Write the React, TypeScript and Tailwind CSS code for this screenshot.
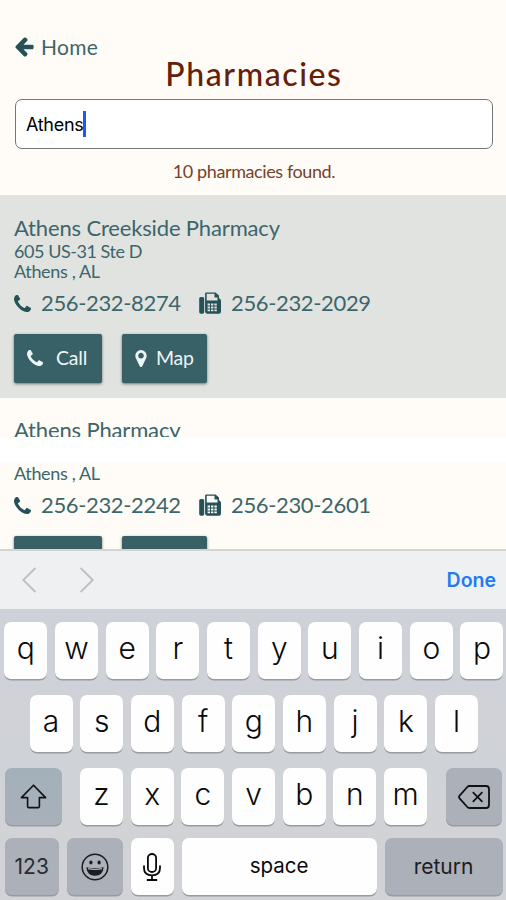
import type { ReactNode } from "react";
import clsx from "clsx";

type IconProps = { className?: string };

function ArrowLeftIcon({ className }: IconProps) {
  return (
    <svg className={className} viewBox="64 150 1472 1620" fill="currentColor">
      <path d="M1536 896v128q0 53-32.5 90.5t-84.5 37.5h-704l293 294q38 36 38 90t-38 90l-75 76q-37 37-90 37-52 0-91-37l-651-652q-37-37-37-90 0-52 37-91l651-650q38-38 91-38 52 0 90 38l75 74q38 38 38 91t-38 91l-293 293h704q52 0 84.5 37.5t32.5 90.5z" />
    </svg>
  );
}

function PhoneIcon({ className }: IconProps) {
  return (
    <svg className={className} viewBox="0 0 1408 1408" fill="currentColor">
      <path d="M1408 1112q0 27-10 70.5t-21 68.5q-21 50-122 106-94 51-186 51-27 0-53-3.5t-57.5-12.5-47-14.5-55.5-20.5-49-18q-98-35-175-83-127-79-264-216t-216-264q-48-77-83-175-3-9-18-49t-20.5-55.5-14.5-47-12.5-57.5-3.5-53q0-92 51-186 56-101 106-122 25-11 68.5-21t70.5-10q14 0 21 3 18 6 53 76 11 19 30 54t35 63.5 31 53.5q3 4 17.5 25t21.5 35.5 7 28.5q0 20-28.5 50t-62 55-62 53-28.5 46q0 9 5 22.5t8.5 20.5 14 24 11.5 19q76 137 174 235t235 174q2 1 19 11.5t24 14 20.5 8.5 22.5 5q18 0 46-28.5t53-62 55-62 50-28.5q14 0 28.5 7t35.5 21.5 25 17.5q25 15 53.5 31t63.5 35 54 30q70 35 76 53 3 7 3 21z" />
    </svg>
  );
}

function FaxIcon({ className }: IconProps) {
  return (
    <svg className={className} viewBox="0 0 22 22" fill="none">
      <rect x="0.2" y="5" width="5" height="16.7" rx="1.6" fill="currentColor" />
      <path
        fillRule="evenodd"
        fill="currentColor"
        d="M6.1 1.5Q6.1.4 7.2.4H16.6L20 3.6V6.2Q22 7 22 9V19.5Q22 21.7 19.8 21.7H8.2Q6.1 21.7 6.1 19.6ZM7.7 1.8V8.5H18.5V5.4H15.5V1.8ZM8.6 11.6V19.2H17.8V11.6Z"
      />
      <path
        fill="currentColor"
        d="M11 11h1v9h-1zM14.4 11h1v9h-1zM8.3 13.6h10v1H8.3zM8.3 16.4h10v1H8.3z"
      />
    </svg>
  );
}

function MarkerIcon({ className }: IconProps) {
  return (
    <svg className={className} viewBox="0 384 1024 1536" fill="currentColor">
      <path d="M768 896q0 106-75 181t-181 75-181-75-75-181 75-181 181-75 181 75 75 181zm256 0q0 109-33 179l-364 774q-16 33-47.5 52t-67.5 19-67.5-19-46.5-52l-365-774q-33-70-33-179 0-212 150-362t362-150 362 150 150 362z" fillRule="evenodd" />
    </svg>
  );
}

function ShiftIcon() {
  return (
    <svg className="h-[25px] w-[27px]" viewBox="0 0 27 25" fill="none" stroke="#111" strokeWidth="1.6" strokeLinejoin="round">
      <path d="M13.5 1.2 25.6 13.6H19.4V22.6Q19.4 23.6 18.4 23.6H8.6Q7.6 23.6 7.6 22.6V13.6H1.4Z" />
    </svg>
  );
}

function BackspaceIcon() {
  return (
    <svg className="h-6 w-8" viewBox="0 0 32 24" fill="none" stroke="#111" strokeWidth="1.8" strokeLinejoin="round" strokeLinecap="round">
      <path d="M11.5 1H28Q31 1 31 4V20Q31 23 28 23H11.5Q10.2 23 9.3 22L1.6 13.4Q.5 12 1.6 10.6L9.3 2Q10.2 1 11.5 1Z" />
      <path d="m14.8 7.2 9.6 9.6m0-9.6-9.6 9.6" strokeLinecap="butt" />
    </svg>
  );
}

function EmojiIcon() {
  return (
    <svg className="h-7 w-7" viewBox="0 0 28 28" fill="none">
      <circle cx="14" cy="14" r="12.8" stroke="#1b1c1f" strokeWidth="1.5" />
      <ellipse cx="9.9" cy="9.6" rx="1.6" ry="2" fill="#1b1c1f" />
      <ellipse cx="18.1" cy="9.6" rx="1.6" ry="2" fill="#1b1c1f" />
      <path d="M5.3 14.2Q14 16 22.7 14.2 21.8 22.8 14 22.8 6.2 22.8 5.3 14.2Z" fill="#1b1c1f" />
      <path d="M7 15.6Q14 17 21 15.6" stroke="#b4b8c0" strokeWidth="1.3" />
    </svg>
  );
}

function MicIcon() {
  return (
    <svg className="h-7 w-[18px]" viewBox="0 0 18 28" fill="none" stroke="#0a0a0a" strokeWidth="1.8">
      <rect x="4.9" y="1" width="8.2" height="18" rx="4.1" />
      <path d="M1 12.5V15Q1 22.3 9 22.3T17 15V12.5M9 22.3V27M3.8 27H14.2" />
    </svg>
  );
}

function ContactRow({ phone, fax }: { phone: string; fax: string }) {
  return (
    <div className="flex h-7 items-center text-[22px] leading-7 tracking-[-0.35px]">
      <PhoneIcon className="h-[17px] w-[17px] text-[#245258]" />
      <span className="ml-[10px] w-[158px]">{phone}</span>
      <FaxIcon className="h-[22px] w-[22px] text-[#245258]" />
      <span className="ml-[10px]">{fax}</span>
    </div>
  );
}

function ActionButtons() {
  return (
    <div className="flex gap-5 text-[19.5px] tracking-[-0.2px] text-[#eef5f5]">
      <button className="flex h-[49px] w-[88px] items-center rounded-[2px] bg-[#386067] pb-px pl-[13px] shadow-[0_1px_3px_rgba(0,0,0,0.5)]">
        <PhoneIcon className="mr-[13px] h-4 w-4" />
        Call
      </button>
      <button className="flex h-[49px] w-[85px] items-center rounded-[2px] bg-[#386067] pb-px pl-[13px] shadow-[0_1px_3px_rgba(0,0,0,0.5)]">
        <MarkerIcon className="mr-[9px] h-[17px] w-[12px]" />
        Map
      </button>
    </div>
  );
}

function Key({ children, className, dark }: { children: ReactNode; className?: string; dark?: boolean }) {
  return (
    <div
      className={clsx(
        "flex h-[57px] shrink-0 items-center justify-center rounded-[7px] shadow-[0_1.5px_0_#989ba1]",
        dark ? "bg-[#abb0b9]" : "bg-[#fefefe]",
        className
      )}
    >
      {children}
    </div>
  );
}

function Letters({ letters }: { letters: string }) {
  return (
    <div className="flex gap-[7.7px]">
      {letters.split("").map((letter) => (
        <Key key={letter} className="w-[43px] pb-1 text-[30px] font-[360]">
          {letter}
        </Key>
      ))}
    </div>
  );
}

export default function App() {
  return (
    <div className="flex h-[900px] w-[506px] flex-col overflow-hidden bg-[#fffcf7] font-['Lato',sans-serif] text-[#3b666b]">
      {/* Header and search */}
      <header className="h-[195px] shrink-0 px-[15px] pt-[34px]">
        <a className="flex h-[26px] items-center text-[21px] tracking-[0.3px]">
          <ArrowLeftIcon className="mr-[7px] h-[20px] w-[19px] text-[#245258]" />
          Home
        </a>
        <h1 className="-mt-[6px] h-10 pl-[2px] text-center text-[32px] leading-10 font-medium tracking-[1.6px] text-[#642008]">
          Pharmacies
        </h1>
        <div className="mt-[5px] flex h-[50px] w-[478px] items-center rounded-[7px] border-[1.5px] border-[#777] bg-white pl-[10px] font-['Inter',sans-serif] text-[18px] tracking-[-0.3px] text-black">
          Athens
          <span className="h-[26px] w-[3px] bg-[#2457ea]" />
        </div>
        <p className="mt-[10px] pl-[2px] text-center text-[18px] leading-6 tracking-[-0.4px] text-[#77412c]">
          10 pharmacies found.
        </p>
      </header>

      {/* First result */}
      <section className="h-[203px] shrink-0 bg-[#e1e3e0] px-[14px] pt-[20px]">
        <h2 className="text-[22px] leading-[26px] tracking-[-0.15px]">Athens Creekside Pharmacy</h2>
        <p className="text-[18px] leading-5 tracking-[-0.45px]">605 US-31 Ste D</p>
        <p className="mb-[8px] text-[18px] leading-5 tracking-[-0.35px]">Athens , AL</p>
        <ContactRow phone="256-232-8274" fax="256-232-2029" />
        <div className="mt-[17px]">
          <ActionButtons />
        </div>
      </section>

      {/* Second result, cut by the white strip and the keyboard */}
      <section className="h-[151px] shrink-0 overflow-hidden">
        <h2 className="h-[39px] overflow-hidden px-[14px] pt-[19px] text-[22px] leading-[26px] tracking-[-0.15px]">
          Athens Pharmacy
        </h2>
        <div className="h-[25px] bg-white" />
        <div className="px-[14px] pt-[1px]">
          <p className="mb-2 text-[18px] leading-5 tracking-[-0.35px]">Athens , AL</p>
          <ContactRow phone="256-232-2242" fax="256-230-2601" />
          <div className="mt-[17px]">
            <ActionButtons />
          </div>
        </div>
      </section>

      {/* Keyboard toolbar */}
      <div className="flex h-[60px] shrink-0 items-center border-t-2 border-[#d4d4d2] bg-[#eff0f2] pr-[10px] pl-[22px]">
        <svg className="h-[26px] w-[73px]" viewBox="0 0 73 26" fill="none" stroke="#bcbec1" strokeWidth="1.8">
          <path d="M13.5 1 1.2 13l12.3 12M58.5 1l12.3 12-12.3 12" />
        </svg>
        <span className="ml-auto pt-[2px] font-['Inter',sans-serif] text-[19.5px] font-semibold text-[#217cf1]">Done</span>
      </div>

      {/* Keyboard */}
      <div className="h-[291px] shrink-0 bg-linear-to-b from-[#ced1d8] to-[#d1d3d6] pt-[13px] font-['Inter',sans-serif] text-[#0a0a0a]">
        <div className="flex h-[73px] pl-[4.3px]">
          <Letters letters="qwertyuiop" />
        </div>
        <div className="flex h-[73px] pl-[29.5px]">
          <Letters letters="asdfghjkl" />
        </div>
        <div className="flex h-[70px] pl-[4.5px]">
          <Key dark className="mr-[18.5px] w-[57px] bg-linear-to-b from-[#a2b0ba] to-[#a9b0ba]">
            <ShiftIcon />
          </Key>
          <Letters letters="zxcvbnm" />
          <Key dark className="ml-[18.5px] w-[56.5px]">
            <BackspaceIcon />
          </Key>
        </div>
        <div className="flex gap-2 pl-[4.5px] text-[21px]">
          <Key dark className="w-[54.5px] text-[#2a2b2e]">
            123
          </Key>
          <Key dark className="w-[55.5px]">
            <EmojiIcon />
          </Key>
          <Key className="w-[43px]">
            <MicIcon />
          </Key>
          <Key className="w-[195px] text-[20.5px]">space</Key>
          <Key dark className="w-[118px] text-[#1c1d1f]">
            return
          </Key>
        </div>
      </div>
    </div>
  );
}
